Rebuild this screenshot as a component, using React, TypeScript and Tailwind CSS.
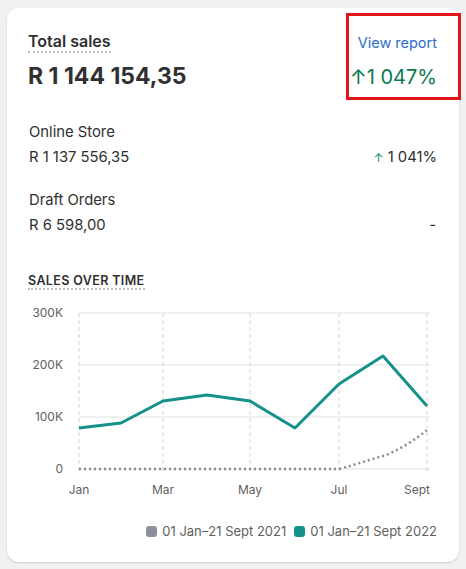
import React from 'react';

const grid = [12, 64, 116, 168];
const months = [
  { label: 'Jan', x: 51, anchor: 'middle' },
  { label: 'Mar', x: 135, anchor: 'middle' },
  { label: 'May', x: 222, anchor: 'middle' },
  { label: 'Jul', x: 311, anchor: 'middle' },
  { label: 'Sept', x: 402, anchor: 'end' },
];
const vlines = [51, 135, 222, 311, 399];

function SalesChart() {
  return (
    <svg width="412" height="200" viewBox="0 0 412 200" className="block">
      {grid.map((y) => (
        <line key={y} x1="51" x2="402" y1={y} y2={y} stroke="#e3e3e3" strokeWidth="1" />
      ))}
      {vlines.map((x) => (
        <line key={x} x1={x} x2={x} y1="12" y2="172" stroke="#d4d4d4" strokeWidth="1" strokeDasharray="4 3" />
      ))}
      {['300K', '200K', '100K', '0'].map((l, i) => (
        <text key={l} x="35" y={grid[i] + 4} textAnchor="end" fontSize="12" fill="#616161">
          {l}
        </text>
      ))}
      {months.map((m) => (
        <text key={m.label} x={m.x} y="193" textAnchor={m.anchor as 'middle' | 'end'} fontSize="12" fill="#616161">
          {m.label}
        </text>
      ))}
      <path
        d="M51 168 L311 168 C330 163 340 159 355 155 C372 149 388 138 399 129"
        fill="none"
        stroke="#8a8a8a"
        strokeWidth="2.5"
        strokeDasharray="2 3"
      />
      <polyline
        points="51,127 93,122 135,100 179,94 222,100 267,127 311,83 355,55 399,105"
        fill="none"
        stroke="#149189"
        strokeWidth="3"
        strokeLinejoin="round"
      />
    </svg>
  );
}

export default function App() {
  return (
    <div className="relative min-h-[569px] bg-[#f1f1f1] pt-[8px] pb-[10px] px-[7px] font-['Inter',sans-serif] text-[#303030]">
      <div className="rounded-xl bg-white shadow-[0_1px_2px_rgba(0,0,0,0.15)] px-[21px] pt-[21px] pb-[22px]">
        <div className="flex justify-between">
          <div>
            <span className="text-[16px] font-semibold leading-[22px] border-b-2 border-dotted border-[#bdbdbd]">
              Total sales
            </span>
            <div className="mt-[9px] text-[23px] font-bold leading-[28px]">R 1 144 154,35</div>
          </div>
          <div className="flex flex-col items-end pr-[1px] pt-[2px]">
            <span className="text-[14.5px] text-[#2c6ecb] leading-[22px] pt-[1px]">View report</span>
            <span className="mt-[10px] text-[20px] text-[#0b7a4e] leading-[26px]">↑1 047%</span>
          </div>
        </div>

        <div className="mt-[30px] pl-[1px] pr-[1px] text-[14.8px] leading-[25px]">
          <div>Online Store</div>
          <div className="flex justify-between">
            <span>R 1 137 556,35</span>
            <span>
              <span className="text-[#14916c] text-[12px]">↑</span> 1 041%
            </span>
          </div>
          <div className="mt-[18px]">Draft Orders</div>
          <div className="flex justify-between">
            <span>R 6 598,00</span>
            <span className="pr-[1px]">-</span>
          </div>
        </div>

        <div className="mt-[29px]">
          <span className="text-[12.5px] font-semibold tracking-[0.03em] leading-[18px] border-b-2 border-dotted border-[#bdbdbd]">
            SALES OVER TIME
          </span>
        </div>

        <div className="mt-[10px]">
          <SalesChart />
        </div>

        <div className="mt-[21px] flex justify-end items-center gap-[8px] pr-[1px] text-[13px] text-[#616161] leading-[18px]">
          <span className="flex items-center gap-[5px]">
            <span className="inline-block w-[11px] h-[11px] rounded-[3px] bg-[#8a919b]" />
            01 Jan–21 Sept 2021
          </span>
          <span className="flex items-center gap-[5px]">
            <span className="inline-block w-[11px] h-[11px] rounded-[3px] bg-[#149189]" />
            01 Jan–21 Sept 2022
          </span>
        </div>
      </div>

      <div className="absolute left-[346px] top-[13px] w-[115px] h-[87px] border-[3px] border-[#e4141b]" />
    </div>
  );
}
